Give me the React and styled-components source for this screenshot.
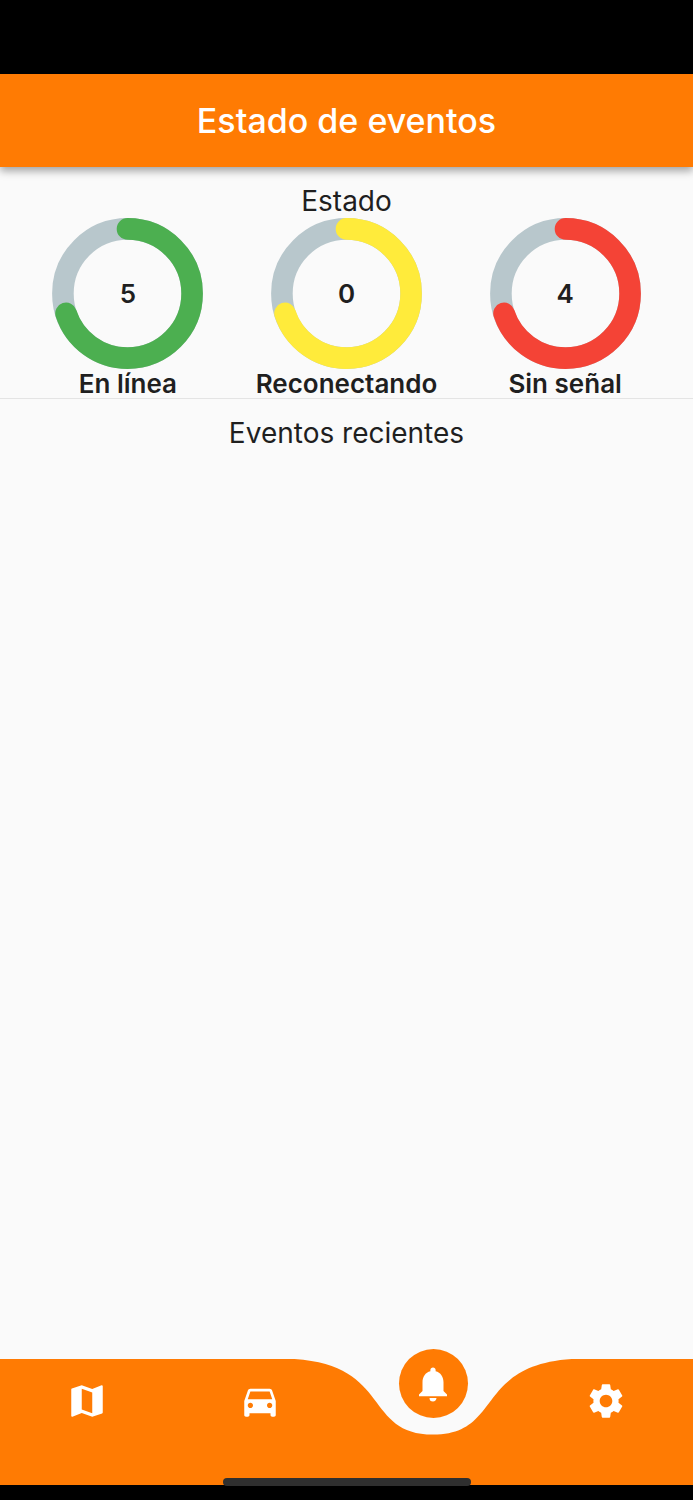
import React from "react";
import styled, { createGlobalStyle } from "styled-components";
import { MdMap, MdDirectionsCar, MdNotifications, MdSettings } from "react-icons/md";

const ORANGE = "#ff7b03";

const GlobalStyle = createGlobalStyle`
  *, *::before, *::after { box-sizing: border-box; }
  body {
    margin: 0;
    background: #fafafa;
    color: #1f1f1f;
    font-family: Inter, "Liberation Sans", sans-serif;
  }
`;

const Screen = styled.div`
  display: flex;
  flex-direction: column;
  min-height: 100vh;
`;

const StatusBar = styled.div`
  height: 74px;
  background: #000;
`;

const AppBar = styled.header`
  position: relative;
  display: flex;
  align-items: center;
  justify-content: center;
  height: 93px;
  background: ${ORANGE};
  box-shadow: 0 4px 8px rgba(0, 0, 0, 0.35);
`;

const Title = styled.h1`
  margin: 0;
  color: #fff;
  font-size: 34px;
  line-height: 40px;
  font-weight: 500;
`;

const Content = styled.main`
  flex: 1;
`;

const Section = styled.section`
  padding-top: 17px;
`;

const SectionTitle = styled.h2`
  margin: 0;
  text-align: center;
  font-size: 28px;
  line-height: 34px;
  font-weight: 400;
`;

const Gauges = styled.div`
  display: flex;
  justify-content: space-evenly;
  border-bottom: 1px solid #e4e4e4;
`;

const Gauge = styled.div`
  display: flex;
  flex-direction: column;
  align-items: center;
`;

const Dial = styled.div`
  display: grid;
  place-items: center;
  width: 151px;
  height: 151px;

  > * { grid-area: 1 / 1; }
`;

const Count = styled.span`
  font-size: 26px;
  line-height: 29px;
  font-weight: 600;
`;

const GaugeLabel = styled.span`
  font-size: 26px;
  line-height: 29px;
  font-weight: 600;
`;

const Footer = styled.footer`
  position: relative;
`;

const NavBar = styled.nav`
  position: relative;
  height: 126px;
`;

const Wave = styled.svg`
  position: absolute;
  inset: 0;
  width: 100%;
  height: 100%;
  fill: ${ORANGE};
`;

const NavItems = styled.div`
  position: relative;
  display: grid;
  grid-template-columns: repeat(4, 1fr);
  height: 84px;
`;

const NavButton = styled.button`
  display: flex;
  align-items: center;
  justify-content: center;
  padding: 0;
  border: 0;
  background: none;
  color: #fff;
  font-size: 42px;
  cursor: pointer;
`;

const ActiveButton = styled(NavButton)`
  justify-self: center;
  width: 69px;
  height: 69px;
  margin-top: -10px;
  border-radius: 50%;
  background: ${ORANGE};
`;

const BottomInset = styled.div`
  height: 15px;
  background: #000;
`;

const HomeIndicator = styled.div`
  position: absolute;
  bottom: 14px;
  left: 50%;
  width: 248px;
  height: 8px;
  margin-left: -124px;
  border-radius: 4px;
  background: #2f2f2f;
`;

const gauges = [
  { label: "En línea", count: 5, color: "#4caf50" },
  { label: "Reconectando", count: 0, color: "#ffeb3b" },
  { label: "Sin señal", count: 4, color: "#f44336" },
];

const navItems = [
  { label: "Mapa", Icon: MdMap },
  { label: "Vehículos", Icon: MdDirectionsCar },
  { label: "Eventos", Icon: MdNotifications, active: true },
  { label: "Ajustes", Icon: MdSettings },
];

function Ring({ color }) {
  return (
    <svg width="151" height="151" viewBox="0 0 151 151" fill="none" strokeWidth="21.6" aria-hidden="true">
      <circle cx="75.5" cy="75.5" r="64.6" stroke="#b8c7cc" />
      <circle
        cx="75.5"
        cy="75.5"
        r="64.6"
        stroke={color}
        strokeLinecap="round"
        pathLength="100"
        strokeDasharray="70 100"
        transform="rotate(-90 75.5 75.5)"
      />
    </svg>
  );
}

export default function App() {
  return (
    <Screen>
      <GlobalStyle />
      <StatusBar />
      <AppBar>
        <Title>Estado de eventos</Title>
      </AppBar>
      <Content>
        <Section>
          <SectionTitle>Estado</SectionTitle>
          <Gauges>
            {gauges.map(({ label, count, color }) => (
              <Gauge key={label}>
                <Dial>
                  <Ring color={color} />
                  <Count>{count}</Count>
                </Dial>
                <GaugeLabel>{label}</GaugeLabel>
              </Gauge>
            ))}
          </Gauges>
        </Section>
        <Section>
          <SectionTitle>Eventos recientes</SectionTitle>
        </Section>
      </Content>
      <Footer>
        <NavBar>
          <Wave viewBox="0 0 1000 100" preserveAspectRatio="none" aria-hidden="true">
            <path d="M0 0H425C565 5 525 60 625 60C725 60 685 5 825 0H1000V100H0Z" />
          </Wave>
          <NavItems>
            {navItems.map(({ label, Icon, active }) => {
              const Button = active ? ActiveButton : NavButton;
              return (
                <Button key={label} type="button" aria-label={label} aria-current={active ? "page" : undefined}>
                  <Icon />
                </Button>
              );
            })}
          </NavItems>
        </NavBar>
        <BottomInset />
        <HomeIndicator />
      </Footer>
    </Screen>
  );
}
